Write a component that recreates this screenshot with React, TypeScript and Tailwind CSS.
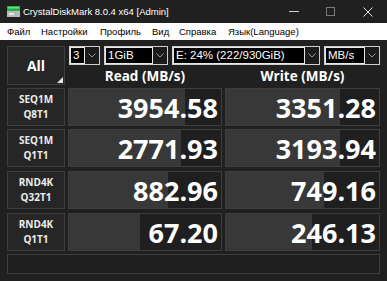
import React from "react";

const rows = [
  { l1: "SEQ1M", l2: "Q8T1", r: 3954.58, w: 3351.28 },
  { l1: "SEQ1M", l2: "Q1T1", r: 2771.93, w: 3193.94 },
  { l1: "RND4K", l2: "Q32T1", r: 882.96, w: 749.16 },
  { l1: "RND4K", l2: "Q1T1", r: 67.2, w: 246.13 },
];

const pct = (v: number) => Math.min(100, 17 + 16.4 * Math.log10(v));

function Chevron() {
  return (
    <svg width="8" height="5" viewBox="0 0 8 5" className="shrink-0">
      <path d="M0.5 0.5 L4 4 L7.5 0.5" fill="none" stroke="#9a9a9a" strokeWidth="1" />
    </svg>
  );
}

function Combo({ w, text }: { w: string; text: string }) {
  return (
    <div className={`${w} h-[19px] shrink-0 border border-[#cfcfcf] bg-[#1b1b1b] flex items-center`}>
      <div
        className="h-full flex-1 min-w-0 bg-black border border-[#e8e8e8] flex items-center pl-[2px] text-[11.5px] leading-none text-white whitespace-nowrap overflow-hidden"
        style={{ fontFamily: '"Liberation Sans", Arial, sans-serif' }}
      >
        {text}
      </div>
      <div className="w-[14px] shrink-0 flex justify-center">
        <Chevron />
      </div>
    </div>
  );
}

function Cell({ v, w }: { v: number; w: string }) {
  return (
    <div className={`${w} relative h-full border border-[#3e3e3e] bg-[#1f1f1f] overflow-hidden`}>
      <div className="absolute left-0 top-0 bottom-0 bg-[#383838]" style={{ width: `${pct(v)}%` }} />
      <div className="relative h-full flex items-center justify-end pr-[3px] text-white font-bold text-[27px] leading-none" style={{ fontFamily: '"Open Sans", sans-serif' }}>
        {v.toFixed(2)}
      </div>
    </div>
  );
}

export default function App() {
  const gaps = ["mt-0", "mt-[3px]", "mt-[4px]", "mt-[4px]"];
  const ui = { fontFamily: '"Liberation Sans", Arial, sans-serif' };
  return (
    <div className="w-[387px] h-[281px] bg-[#202020] overflow-hidden flex flex-col" style={ui}>
      {/* title bar */}
      <div className="h-[23px] flex items-center bg-[#202020] text-white text-[9.5px] whitespace-nowrap">
        <svg width="13" height="11" viewBox="0 0 13 11" className="ml-[7px] mr-[3px] shrink-0">
          <rect x="0" y="0" width="13" height="5" fill="#22b14c" />
          <rect x="1" y="1" width="11" height="1.5" fill="#6ee07a" />
          <rect x="0" y="5" width="13" height="6" fill="#b8b8b8" />
          <rect x="2" y="7" width="5" height="2" fill="#e8e8e8" />
        </svg>
        <span className="leading-none">CrystalDiskMark 8.0.4 x64 [Admin]</span>
        <div className="ml-auto flex items-center h-full">
          <div className="w-[37px] flex justify-center">
            <div className="w-[10px] h-px bg-[#cfcfcf]" />
          </div>
          <div className="w-[37px] flex justify-center">
            <div className="w-[9px] h-[9px] border border-[#7a7a7a]" />
          </div>
          <div className="w-[38px] flex justify-center">
            <svg width="10" height="10" viewBox="0 0 10 10">
              <path d="M0.5 0.5 L9.5 9.5 M9.5 0.5 L0.5 9.5" stroke="#e0e0e0" strokeWidth="1" />
            </svg>
          </div>
        </div>
      </div>
      {/* menu bar */}
      <div className="h-[17px] bg-white flex items-center text-[9.5px] text-black leading-none pl-[7px] whitespace-nowrap">
        <div className="w-[34px] shrink-0">Файл</div>
        <div className="w-[59px] shrink-0">Настройки</div>
        <div className="w-[52px] shrink-0">Профиль</div>
        <div className="w-[27px] shrink-0">Вид</div>
        <div className="w-[49px] shrink-0">Справка</div>
        <div className="shrink-0">Язык(Language)</div>
      </div>
      {/* main */}
      <div className="flex-1 pl-[7px] pt-[6px] flex flex-col">
        <div className="flex h-[39px]">
          <div className="w-[58px] h-full relative bg-[#262626] border border-[#3e3e3e] flex items-center justify-center text-white font-bold text-[14px]" style={{ fontFamily: '"Open Sans", sans-serif' }}>
            All
            <svg width="6" height="6" viewBox="0 0 6 6" className="absolute right-[1px] bottom-[1px]">
              <path d="M6 0 L6 6 L0 6 Z" fill="#e6e6e6" />
            </svg>
          </div>
          <div className="flex flex-col ml-[4px]">
            <div className="flex gap-[4px]">
              <Combo w="w-[31px]" text="3" />
              <Combo w="w-[64px]" text="1GiB" />
              <Combo w="w-[148px]" text="E: 24% (222/930GiB)" />
              <Combo w="w-[56px]" text="MB/s" />
            </div>
            <div className="flex flex-1 items-end text-white font-bold text-[13.5px] leading-none pb-[2px]" style={{ fontFamily: '"Open Sans", sans-serif' }}>
              <div className="w-[154px] -ml-[1px] text-center">Read (MB/s)</div>
              <div className="w-[155px] ml-[3px] text-center">Write (MB/s)</div>
            </div>
          </div>
        </div>
        <div className="flex flex-col mt-[3px]">
          {rows.map((r, i) => (
            <div key={i} className={`flex h-[38px] gap-[3px] ${gaps[i]}`}>
              <div className="w-[58px] h-full bg-[#262626] border border-[#3e3e3e] flex flex-col items-center justify-center text-[#ececec] font-bold text-[10px] leading-[15px]" style={{ fontFamily: '"Open Sans", sans-serif' }}>
                <span>{r.l1}</span>
                <span>{r.l2}</span>
              </div>
              <Cell v={r.r} w="w-[154px]" />
              <Cell v={r.w} w="w-[155px]" />
            </div>
          ))}
        </div>
        <div className="mt-[3px] w-[373px] h-[20px] border border-[#3e3e3e] bg-[#1e1e1e]" />
      </div>
    </div>
  );
}
